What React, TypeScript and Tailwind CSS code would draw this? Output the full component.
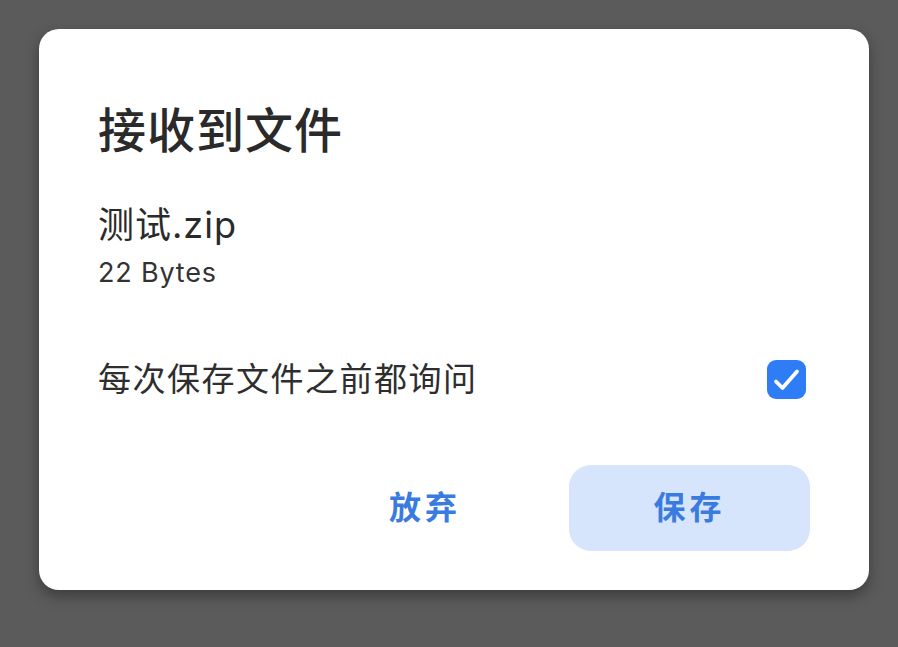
import React, { useState } from 'react';

const App: React.FC = () => {
  const [askEveryTime, setAskEveryTime] = useState<boolean>(true);

  return (
    <div
      className="w-[898px] h-[647px] bg-[#5b5b5b] pt-[29px] pl-[39px]"
      style={{ fontFamily: 'Inter, "Noto Sans CJK SC", sans-serif' }}
    >
      <div className="w-[830px] h-[561px] bg-white rounded-[20px] shadow-[0_6px_14px_rgba(0,0,0,0.35)] px-[59px] pt-[78px] flex flex-col">
        <h1 className="text-[48px] leading-[48px] font-medium text-[#2a2a2a] tracking-[1px]">接收到文件</h1>

        <div className="mt-[52px] text-[36px] leading-[36px] text-[#2a2a2a] tracking-[1px]">测试.zip</div>
        <div className="mt-[17px] text-[27px] leading-[26px] text-[#333333] tracking-[0.8px]">22 Bytes</div>

        <div className="mt-[73px] flex items-center justify-between h-[40px]">
          <span className="text-[33px] leading-[40px] text-[#2e2e2e] tracking-[1.5px]">每次保存文件之前都询问</span>
          <button
            onClick={() => setAskEveryTime(!askEveryTime)}
            className={`w-[39px] h-[39px] rounded-[9px] mr-[4px] flex items-center justify-center ${
              askEveryTime ? 'bg-[#2e7cf6]' : 'border-2 border-[#777]'
            }`}
          >
            {askEveryTime && (
              <svg width="39" height="39" viewBox="0 0 39 39" fill="none" stroke="white" strokeWidth="3.8" strokeLinecap="round" strokeLinejoin="round">
                <path d="M9 21.5l6.5 6.5L30 11.5" />
              </svg>
            )}
          </button>
        </div>

        <div className="mt-[66px] flex items-center justify-end">
          <button className="h-[86px] px-[28px] mr-[80px] text-[32px] font-semibold text-[#3a7be0] tracking-[4px]">放弃</button>
          <button className="w-[241px] h-[86px] rounded-[22px] bg-[#d6e4fc] text-[32px] font-semibold text-[#3a7be0] tracking-[4px]">保存</button>
        </div>
      </div>
    </div>
  );
};

export default App;
